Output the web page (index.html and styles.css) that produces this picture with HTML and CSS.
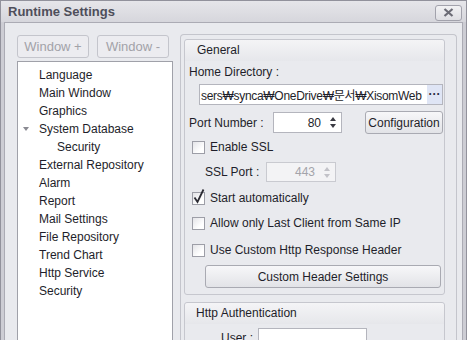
FILE: index.html
```html
<!DOCTYPE html>
<html lang="en">
<head>
    <meta charset="UTF-8">
    <title>Runtime Settings</title>
    <link rel="stylesheet" href="styles.css">
</head>
<body>
    <div class="window">
        <div class="titlebar">
            <span class="title">Runtime Settings</span>
            <button class="close">
                <svg width="11" height="9" viewBox="0 0 11 9"><path d="M1.5 1 L9.5 8 M9.5 1 L1.5 8" stroke="#6c6c76" stroke-width="2.2"/></svg>
            </button>
        </div>

        <div class="client">
            <div class="side">
                <div class="side-buttons">
                    <button class="btn" disabled>Window +</button>
                    <button class="btn" disabled>Window -</button>
                </div>
                <ul class="tree">
                    <li>Language</li>
                    <li>Main Window</li>
                    <li>Graphics</li>
                    <li><span class="caret"></span>System Database</li>
                    <li class="child">Security</li>
                    <li>External Repository</li>
                    <li>Alarm</li>
                    <li>Report</li>
                    <li>Mail Settings</li>
                    <li>File Repository</li>
                    <li>Trend Chart</li>
                    <li>Http Service</li>
                    <li>Security</li>
                </ul>
            </div>

            <div class="panel">
                <section class="group">
                    <div class="group-head">General</div>
                    <div class="group-body">
                        <div class="field-label">Home Directory :</div>
                        <div class="path">
                            <span class="path-text">sers₩synca₩OneDrive₩문서₩XisomWeb</span>
                            <span class="browse">···</span>
                        </div>

                        <div class="port-row">
                            <span class="port-label">Port Number :</span>
                            <span class="spin">
                                <span class="spin-value">80</span>
                                <span class="arrows"><i class="up"></i><i class="down"></i></span>
                            </span>
                            <button class="btn config">Configuration</button>
                        </div>

                        <div class="check-row ssl">
                            <span class="box"></span>Enable SSL
                        </div>

                        <div class="ssl-row">
                            <span class="ssl-label">SSL Port :</span>
                            <span class="spin disabled">
                                <span class="spin-value">443</span>
                                <span class="arrows"><i class="up"></i><i class="down"></i></span>
                            </span>
                        </div>

                        <div class="check-row auto">
                            <span class="box checked">
                                <svg width="14" height="17" viewBox="0 0 14 17"><path d="M2.5 9.5 L5.5 14 L11.5 1.5" fill="none" stroke="#2c2c34" stroke-width="1.8"/></svg>
                            </span>Start automatically
                        </div>

                        <div class="check-row last-client">
                            <span class="box"></span>Allow only Last Client from Same IP
                        </div>

                        <div class="check-row custom">
                            <span class="box"></span>Use Custom Http Response Header
                        </div>

                        <button class="btn header-btn">Custom Header Settings</button>
                    </div>
                </section>

                <section class="group">
                    <div class="group-head auth">Http Authentication</div>
                    <div class="group-body">
                        <div class="user-row">
                            <span class="user-label">User :</span>
                            <span class="text-input"></span>
                        </div>
                    </div>
                </section>
            </div>
        </div>
    </div>
</body>
</html>
```

FILE: styles.css
```css
body {
    margin: 0;
    font-family: "Liberation Sans", Arial, "Noto Sans CJK KR", sans-serif;
    font-size: 12px;
    color: #1e1e2a;
}

.window {
    width: 467px;
    height: 340px;
    box-sizing: border-box;
    border: 1px solid #92929c;
    border-bottom: none;
    background: #cdcdd4;
    display: flex;
    flex-direction: column;
    overflow: hidden;
}

.titlebar {
    height: 21px;
    flex-shrink: 0;
    display: flex;
    align-items: center;
    justify-content: space-between;
    padding: 0 4px 0 7px;
    background: linear-gradient(#e6e6ea, #d6d6dc);
}

.title {
    font-size: 13px;
    font-weight: bold;
    color: #4e4e5a;
}

.close {
    width: 27px;
    height: 16px;
    margin-top: 2px;
    padding: 0;
    border: 1px solid #a2a2ac;
    border-radius: 3px;
    background: linear-gradient(#f2f2f4, #dedee3);
    display: flex;
    align-items: center;
    justify-content: center;
}

.client {
    flex: 1;
    margin: 0 3px;
    border: 1px solid #ababb4;
    border-bottom: none;
    background: #e9eaee;
    display: flex;
    gap: 7px;
    padding: 11px 5px 0 12px;
    min-height: 0;
}

/* left column */

.side {
    width: 156px;
    flex-shrink: 0;
    display: flex;
    flex-direction: column;
}

.side-buttons {
    display: flex;
    gap: 8px;
    margin-top: 1px;
}

.btn {
    font-family: inherit;
    font-size: 12px;
    color: #1e1e2a;
    border: 1px solid #a9aab2;
    border-radius: 3px;
    background: linear-gradient(#f7f7f9, #e2e3e7);
    padding: 0;
}

.side-buttons .btn {
    width: 72px;
    height: 23px;
    font-size: 13px;
    color: #a2a2a8;
    border-color: #c4c5cc;
    background: #ececf0;
}

.tree {
    flex: 1;
    margin: 3px 0 0;
    padding: 4px 0 0;
    list-style: none;
    background: #fff;
    border: 1px solid #a0a1a9;
    border-bottom: none;
}

.tree li {
    height: 18px;
    display: flex;
    align-items: center;
    padding-left: 21px;
}

.tree li.child {
    padding-left: 39px;
}

.caret {
    margin-left: -16px;
    margin-right: 10px;
    width: 0;
    height: 0;
    border-left: 3px solid transparent;
    border-right: 3px solid transparent;
    border-top: 4px solid #8a8a92;
}

/* right panel */

.panel {
    flex: 1;
    min-width: 0;
    border: 1px solid #c4c5cc;
    border-bottom: none;
    border-radius: 4px 4px 0 0;
    padding: 4px 11px 0 3px;
    display: flex;
    flex-direction: column;
    gap: 7px;
}

.group {
    border: 1px solid #c6c7ce;
    border-radius: 3px;
    flex-shrink: 0;
}

.group-head {
    height: 21px;
    line-height: 21px;
    padding-left: 12px;
    background: linear-gradient(#f4f4f6, #e6e7eb);
    border-radius: 3px 3px 0 0;
}

.group-head.auth {
    padding-left: 11px;
}

.group-body {
    padding: 0 1px 6px 4px;
    display: flex;
    flex-direction: column;
}

.field-label {
    height: 23px;
    line-height: 23px;
}

.path {
    height: 21px;
    box-sizing: border-box;
    margin-left: 10px;
    border: 1px solid #b4b5bd;
    background: #fff;
    display: flex;
    align-items: center;
    overflow: hidden;
}

.path-text {
    flex: 1;
    min-width: 0;
    padding-left: 1px;
    white-space: nowrap;
    overflow: hidden;
    letter-spacing: -0.3px;
}

.browse {
    width: 15px;
    flex-shrink: 0;
    height: 100%;
    background: #dfe5f5;
    font-weight: bold;
    text-align: center;
    line-height: 18px;
    color: #2a2a40;
}

.port-row {
    margin-top: 6px;
    height: 23px;
    display: flex;
    align-items: center;
}

.port-label {
    width: 84px;
}

.spin {
    width: 69px;
    height: 21px;
    box-sizing: border-box;
    border: 1px solid #b4b5bd;
    background: #fff;
    display: flex;
    align-items: center;
}

.spin-value {
    flex: 1;
    text-align: right;
    padding-right: 6px;
}

.arrows {
    width: 11px;
    display: flex;
    flex-direction: column;
    align-items: center;
    gap: 3px;
    margin-right: 3px;
}

.arrows i {
    width: 0;
    height: 0;
    border-left: 3px solid transparent;
    border-right: 3px solid transparent;
}

.arrows .up {
    border-bottom: 4px solid #3a3a42;
}

.arrows .down {
    border-top: 4px solid #3a3a42;
}

.spin.disabled {
    width: 70px;
    height: 20px;
    border-color: #c9cad0;
    background: #f3f3f5;
    color: #a4a4aa;
}

.spin.disabled .arrows .up {
    border-bottom-color: #c2c2c8;
}

.spin.disabled .arrows .down {
    border-top-color: #c2c2c8;
}

.config {
    margin-left: auto;
    width: 78px;
    height: 23px;
}

.check-row {
    height: 18px;
    display: flex;
    align-items: center;
    padding-left: 3px;
}

.box {
    width: 13px;
    height: 13px;
    box-sizing: border-box;
    border: 1px solid #9d9ea7;
    background: linear-gradient(135deg, #e4e4e8, #fff 70%);
    margin-right: 5px;
    position: relative;
}

.box svg {
    position: absolute;
    left: -1px;
    top: -5px;
}

.check-row.ssl {
    margin-top: 4px;
}

.ssl-row {
    margin-top: 6px;
    height: 20px;
    display: flex;
    align-items: center;
    padding-left: 16px;
}

.ssl-label {
    width: 61px;
}

.check-row.auto {
    margin-top: 7px;
}

.check-row.last-client {
    margin-top: 7px;
}

.check-row.custom {
    margin-top: 9px;
}

.header-btn {
    margin: 6px 2px 0 16px;
    height: 23px;
}

.user-row {
    margin-top: 4px;
    display: flex;
    align-items: center;
}

.user-label {
    width: 64px;
    text-align: right;
    margin-right: 5px;
}

.text-input {
    width: 109px;
    height: 20px;
    box-sizing: border-box;
    border: 1px solid #b4b5bd;
    background: #fff;
}
```
